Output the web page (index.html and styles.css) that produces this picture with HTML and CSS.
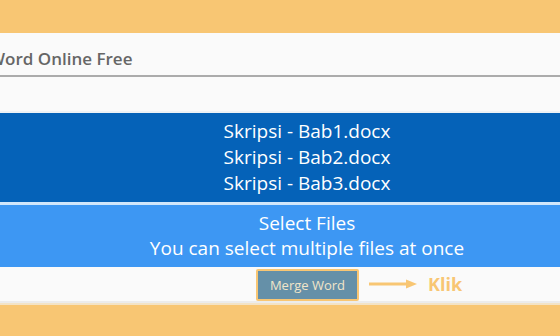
FILE: index.html
```html
<!DOCTYPE html>
<html>
<head>
<meta charset="utf-8">
<link rel="stylesheet" href="styles.css">
</head>
<body>
<div class="page">
  <div class="band"></div>
  <div class="panel">
    <div class="titlebar"><h1 class="title">Word Online Free</h1></div>
    <div class="spacer"></div>
    <div class="files">
      <div>Skripsi - Bab1.docx</div>
      <div>Skripsi - Bab2.docx</div>
      <div>Skripsi - Bab3.docx</div>
    </div>
    <div class="select">
      <div>Select Files</div>
      <div>You can select multiple files at once</div>
    </div>
    <div class="actions">
      <button class="merge">Merge Word</button>
      <svg class="arrow" width="48" height="10" viewBox="0 0 48 10"><path d="M0 5H38" stroke="#f8c673" stroke-width="3"/><path d="M37 0.5L48 5L37 9.5Z" fill="#f8c673"/></svg>
      <span class="klik">Klik</span>
    </div>
  </div>
  <div class="band bottom"></div>
</div>
</body>
</html>
```
FILE: styles.css
```css
* { box-sizing: border-box; }
html, body { margin: 0; padding: 0; }
body { width: 560px; height: 336px; overflow: hidden; background: #f8c673; font-family: "Open Sans", sans-serif; }
.page { display: flex; flex-direction: column; height: 336px; }
.band { height: 33px; background: #f8c673; }
.band.bottom { flex: 1; border-top: 2px solid #f3e3c6; }
.panel { background: #fafafa; display: flex; flex-direction: column; }
.titlebar { height: 44px; padding-top: 8px; border-bottom: 2px solid #ababab; overflow: hidden; display: flex; align-items: center; }
.title { margin: 0 0 0 -11px; font-size: 17px; font-weight: 600; color: #666; white-space: nowrap; }
.spacer { height: 36px; border-bottom: 2px solid #eef2f6; }
.files { background: #0562b8; color: #fff; font-size: 19px; line-height: 26px; text-align: center; padding: 5px 0 6px 54px; border-bottom: 3px solid #d0e6fb; }
.select { background: #3d97f3; color: #fff; font-size: 19px; line-height: 25px; text-align: center; padding: 6px 0 6px 54px; }
.actions { height: 36px; display: flex; align-items: center; padding-left: 256px; border-bottom: 2px solid #ececec; }
.merge { width: 103px; height: 32px; background: #6590a8; border: 2px solid #f8c673; border-radius: 2px; color: #f1e5c9; font-family: "Open Sans", sans-serif; font-size: 13px; padding: 0; margin-top: 1px; }
.arrow { margin-left: 10px; }
.klik { margin-left: 11px; font-size: 18px; font-weight: 700; color: #f8c673; }
```
